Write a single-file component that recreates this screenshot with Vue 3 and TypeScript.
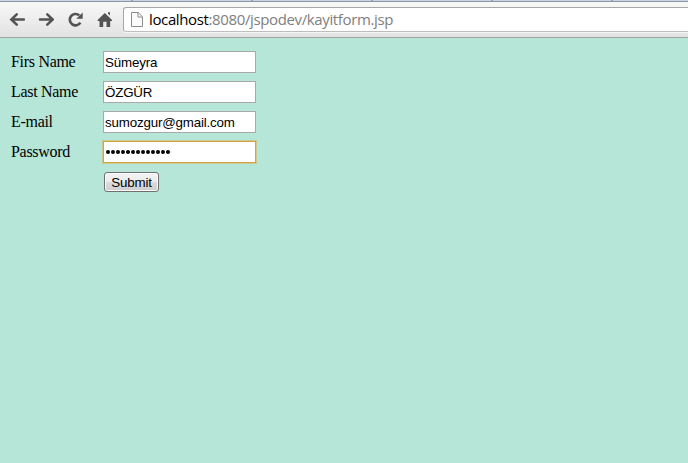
<script setup lang="ts">
import { ref } from 'vue'

interface Field {
  label: string
  type: string
  value: string
  focused?: boolean
}

const fields = ref<Field[]>([
  { label: 'Firs Name', type: 'text', value: 'Sümeyra' },
  { label: 'Last Name', type: 'text', value: 'ÖZGÜR' },
  { label: 'E-mail', type: 'text', value: 'sumozgur@gmail.com' },
  { label: 'Password', type: 'dots', value: '•••••••••••••', focused: true },
])
</script>

<template>
  <div class="window">
    <div class="tabs"><i v-for="n in 5" :key="n"></i></div>
    <header class="toolbar">
      <nav class="nav">
        <svg width="16" height="16" viewBox="0 0 16 16" class="stroke">
          <path d="M15 7.500H3M7.700 2.300L2.300 7.500l5.400 5.200" />
        </svg>
        <svg width="16" height="16" viewBox="0 0 16 16" class="stroke">
          <path d="M2 7.500h12M9.300 2.300L14.700 7.500l-5.400 5.200" />
        </svg>
        <svg width="16" height="16" viewBox="0 0 16 16">
          <path d="M13.400 10.600A5.700 5.700 0 1 1 12.300 3.400" fill="none" stroke="#535353" stroke-width="2.600" />
          <path d="M15.700.500v6.300H9.300z" fill="#535353" />
        </svg>
        <svg width="16" height="16" viewBox="0 0 16 16">
          <path d="M8.800.900L1.600 8v1h1.900v6h3.700v-5.200h3.300V15h3.700V9h1.900V8z" fill="#535353" />
          <path d="M12 .200h2v3.400l-2-2z" fill="#535353" />
        </svg>
      </nav>
      <div class="address">
        <svg width="12" height="16" viewBox="0 0 12 16">
          <path d="M.5 1.500h6.700l4.300 4.300V15.500H.5z" fill="#fcfcfc" stroke="#8b8b8b" />
          <path d="M7 1.500v4.500h4.500" fill="none" stroke="#8b8b8b" />
        </svg>
        <span class="url"><b>localhost</b>:8080/jspodev/kayitform.jsp</span>
      </div>
    </header>
    <main class="page">
      <form class="form" @submit.prevent>
        <template v-for="(f, i) in fields" :key="f.label">
          <label :for="'field' + i">{{ f.label }}</label>
          <div v-if="f.type === 'dots'" class="field dots" :class="{ focused: f.focused }">
            <i v-for="(c, n) in f.value" :key="n"></i>
          </div>
          <input v-else :id="'field' + i" v-model="f.value" class="field" :type="f.type" spellcheck="false" />
        </template>
        <button class="submit" type="submit">Submit</button>
      </form>
    </main>
  </div>
</template>

<style>
body {
  margin: 0;
  overflow: hidden;
}
</style>

<style scoped>
.window {
  display: flex;
  flex-direction: column;
  height: 100vh;
  background: #b6e6d8;
}
.tabs {
  display: flex;
  gap: 118px;
  height: 1px;
  padding-left: 131px;
  background: #c9d6e4;
  border-bottom: 1px solid #8c97a4;
}
.tabs i {
  flex: none;
  width: 2px;
  background: #9aa6b3;
}
.toolbar {
  box-sizing: border-box;
  display: flex;
  height: 36px;
  padding: 5px 0 0 9px;
  border-bottom: 1px solid #a3a5a4;
  background: linear-gradient(#f8f8f8, #e2e2e2);
}
.nav {
  display: flex;
  gap: 13px;
  width: 114px;
  padding-top: 5px;
}
.nav svg {
  flex: none;
}
.stroke {
  fill: none;
  stroke: #535353;
  stroke-width: 2.5;
  stroke-linecap: round;
}
.address {
  box-sizing: border-box;
  flex: 1;
  display: flex;
  align-items: center;
  gap: 6px;
  height: 25px;
  padding: 0 0 1px 7px;
  border: 1px solid #a6a6a6;
  border-bottom-color: #bdbdbd;
  border-right: 0;
  border-radius: 3px 0 0 3px;
  background: #fff;
  box-shadow: 0 1px 0 #f4f4f4;
}
.url {
  font: 15px/20px "Open Sans", sans-serif;
  letter-spacing: -0.37px;
  color: #808080;
  white-space: nowrap;
}
.url b {
  font-weight: 400;
  color: #000;
}
.page {
  padding: 13px 0 0 11px;
}
.form {
  display: grid;
  grid-template-columns: 92px 153px;
  grid-auto-rows: 22px;
  row-gap: 8px;
  align-items: center;
}
.form label {
  font: 16px/18px "Liberation Serif", serif;
  letter-spacing: -0.3px;
  color: #000;
}
.field {
  box-sizing: border-box;
  width: 153px;
  height: 22px;
  margin: 0;
  padding: 1px 1px 0;
  border: 1px solid #a9a9a9;
  background: #fff;
  color: #000;
  font: 13.333px "Liberation Sans", sans-serif;
  letter-spacing: -0.17px;
  outline: none;
}
.dots {
  display: flex;
  align-items: center;
  gap: 1px;
  padding: 0 2px;
}
.dots i {
  width: 4px;
  height: 4px;
  border-radius: 50%;
  background: #000;
}
.focused {
  border-color: #d0a548;
  box-shadow: 0 0 0 1px #dcb65d99;
}
.submit {
  grid-column: 2;
  box-sizing: border-box;
  width: 55px;
  height: 20px;
  margin: 0 0 0 1px;
  padding: 1px 0 0;
  border: 1px solid #707070;
  border-radius: 3px;
  background: linear-gradient(#f3f3f3, #ececec 48%, #dcdcdc 52%, #cfcfcf);
  box-shadow: inset 0 0 0 1px #fafafa;
  color: #000;
  font: 13.333px/17px "Liberation Sans", sans-serif;
  letter-spacing: -0.15px;
}
</style>
